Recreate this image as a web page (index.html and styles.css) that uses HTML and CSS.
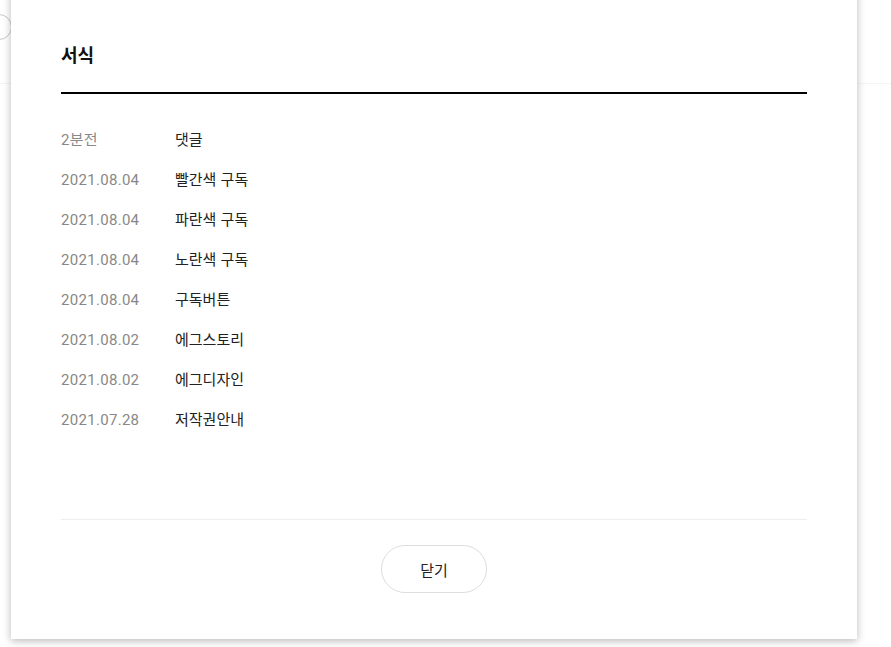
FILE: index.html
```html
<!DOCTYPE html>
<html lang="ko">
<head>
<meta charset="utf-8">
<title>서식</title>
<link rel="stylesheet" href="styles.css">
</head>
<body>
<div class="page">
  <div class="bg-badge"></div>
  <div class="bg-rule"></div>
</div>
<div class="modal">
  <h2 class="modal-title">서식</h2>
  <ul class="log">
    <li class="log-row"><span class="log-date">2분전</span><span class="log-name">댓글</span></li>
    <li class="log-row"><span class="log-date">2021.08.04</span><span class="log-name">빨간색 구독</span></li>
    <li class="log-row"><span class="log-date">2021.08.04</span><span class="log-name">파란색 구독</span></li>
    <li class="log-row"><span class="log-date">2021.08.04</span><span class="log-name">노란색 구독</span></li>
    <li class="log-row"><span class="log-date">2021.08.04</span><span class="log-name">구독버튼</span></li>
    <li class="log-row"><span class="log-date">2021.08.02</span><span class="log-name">에그스토리</span></li>
    <li class="log-row"><span class="log-date">2021.08.02</span><span class="log-name">에그디자인</span></li>
    <li class="log-row"><span class="log-date">2021.07.28</span><span class="log-name">저작권안내</span></li>
  </ul>
  <div class="modal-foot">
    <button class="close-btn" type="button">닫기</button>
  </div>
</div>
</body>
</html>
```

FILE: styles.css
```css
html, body {
  margin: 0;
  padding: 0;
  background: #fff;
  font-family: "Noto Sans CJK KR", "Noto Sans", sans-serif;
  width: 891px;
  height: 647px;
  overflow: hidden;
}
.page {
  position: relative;
  width: 891px;
  height: 647px;
}
.bg-badge {
  position: absolute;
  left: -14px;
  top: 14px;
  width: 24px;
  height: 24px;
  border: 1.5px solid #c8c8c8;
  border-radius: 50%;
}
.bg-rule {
  position: absolute;
  left: 0;
  right: 0;
  top: 83px;
  height: 1px;
  background: #f5f5f5;
}
.modal {
  position: absolute;
  left: 11px;
  top: -20px;
  width: 846px;
  box-sizing: border-box;
  padding: 62px 50px 46px;
  background: #fff;
  box-shadow: 0 2px 8px rgba(0, 0, 0, 0.28);
}
.modal-title {
  margin: 0;
  font-size: 18px;
  font-weight: 700;
  line-height: 24px;
  color: #111;
  padding-bottom: 26px;
  border-bottom: 2px solid #000;
}
.log {
  list-style: none;
  margin: 25px 0 0;
  padding: 0;
  height: 400px;
}
.log-row {
  display: flex;
  align-items: baseline;
  height: 40px;
  line-height: 39px;
  font-size: 15px;
}
.log-date {
  width: 114px;
  color: #888;
  font-family: Roboto, "Noto Sans CJK KR", sans-serif;
  letter-spacing: 0.3px;
}
.log-name {
  color: #222;
}
.modal-foot {
  border-top: 1px solid #eee;
  padding-top: 25px;
  display: flex;
  justify-content: center;
}
.close-btn {
  width: 106px;
  height: 48px;
  border: 1px solid #ddd;
  border-radius: 24px;
  background: #fff;
  font-family: inherit;
  font-size: 15px;
  color: #222;
  padding: 0;
}
```
